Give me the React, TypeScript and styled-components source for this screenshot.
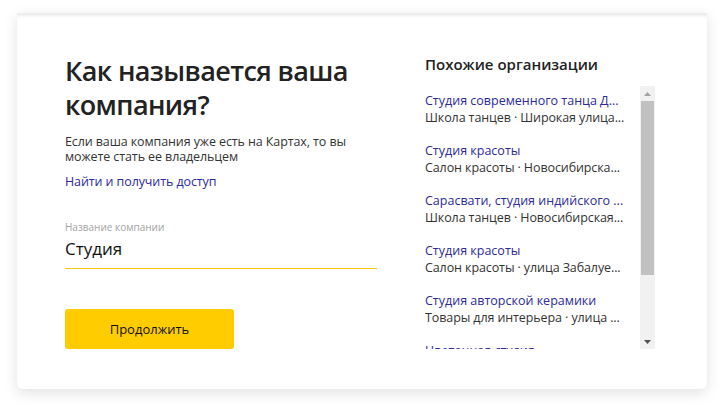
import React from "react";
import styled, { createGlobalStyle } from "styled-components";

const Global = createGlobalStyle`
  html, body { margin: 0; padding: 0; background: #fff; }
  body { font-family: "Open Sans", "Noto Sans", Arial, sans-serif; color: #222; }
  * { box-sizing: border-box; }
`;

const Page = styled.div`
  width: 720px;
  height: 410px;
  padding: 13px 13px 0 17px;
  background: #fff;
`;

const Card = styled.div`
  height: 376px;
  background: #fff;
  border-radius: 0 0 6px 6px;
  box-shadow: 0 4px 14px rgba(0, 0, 0, 0.12), inset 0 4px 3px -1px #ececec;
  display: grid;
  grid-template-columns: 312px 230px;
  column-gap: 48px;
  padding: 41px 52px 0 48px;
`;

const Left = styled.div`
  display: flex;
  flex-direction: column;
`;

const Title = styled.h1`
  margin: 0;
  font-size: 27px;
  line-height: 34px;
  font-weight: 600;
  color: #222;
  letter-spacing: -0.6px;
`;

const Lead = styled.p`
  margin: 12px 0 0;
  font-size: 12.5px;
  line-height: 15px;
  color: #333;
  letter-spacing: -0.1px;
`;

const Link = styled.a`
  margin-top: 10px;
  font-size: 12.5px;
  line-height: 16px;
  color: #2b2b9e;
  text-decoration: none;
  letter-spacing: -0.1px;
`;

const Field = styled.div`
  margin-top: 31px;
  display: flex;
  flex-direction: column;
  border-bottom: 1px solid #f5c800;
  padding-bottom: 8px;
`;

const Label = styled.span`
  font-size: 10px;
  line-height: 12px;
  color: #a3a3a3;
`;

const Value = styled.span`
  margin-top: 5px;
  font-size: 17px;
  line-height: 22px;
  color: #111;
`;

const Button = styled.button`
  margin-top: 40px;
  width: 169px;
  height: 40px;
  border: none;
  border-radius: 3px;
  background: #ffcc00;
  color: #111;
  font-family: inherit;
  font-size: 13px;
`;

const Right = styled.div`
  display: flex;
  flex-direction: column;
`;

const SideTitle = styled.h2`
  margin: 0;
  font-size: 15px;
  line-height: 20px;
  font-weight: 600;
  color: #222;
`;

const ListBox = styled.div`
  margin-top: 12px;
  height: 263px;
  display: flex;
  overflow: hidden;
`;

const List = styled.ul`
  list-style: none;
  margin: 0;
  padding: 7px 0 0;
  flex: 1;
  min-width: 0;
  display: flex;
  flex-direction: column;
  gap: 17px;
`;

const Item = styled.li`
  display: flex;
  flex-direction: column;
`;

const Name = styled.span`
  font-size: 12.5px;
  line-height: 16.5px;
  color: #2d2a9a;
  white-space: nowrap;
`;

const Sub = styled.span`
  font-size: 12.5px;
  line-height: 16.5px;
  color: #333;
  white-space: nowrap;
  letter-spacing: -0.1px;
`;

const Scrollbar = styled.div`
  width: 15px;
  flex: none;
  background: #f1f1f1;
  display: flex;
  flex-direction: column;
  align-items: center;
`;

const Arrow = styled.div`
  height: 15px;
  width: 15px;
  display: flex;
  align-items: center;
  justify-content: center;
`;

const Thumb = styled.div`
  width: 13px;
  height: 174px;
  background: #c1c1c1;
`;

const Spacer = styled.div`
  flex: 1;
`;

const items = [
  ["Студия современного танца Д...", "Школа танцев · Широкая улица..."],
  ["Студия красоты", "Салон красоты · Новосибирска..."],
  ["Сарасвати, студия индийского ...", "Школа танцев · Новосибирская..."],
  ["Студия красоты", "Салон красоты · улица Забалуе..."],
  ["Студия авторской керамики", "Товары для интерьера · улица ..."],
  ["Цветочная студия", "Цветы · улица Ленина, 3"],
];

export default function App() {
  return (
    <>
      <Global />
      <Page>
        <Card>
          <Left>
            <Title>Как называется ваша компания?</Title>
            <Lead>Если ваша компания уже есть на Картах, то вы можете стать ее владельцем</Lead>
            <Link href="#">Найти и получить доступ</Link>
            <Field>
              <Label>Название компании</Label>
              <Value>Студия</Value>
            </Field>
            <Button>Продолжить</Button>
          </Left>
          <Right>
            <SideTitle>Похожие организации</SideTitle>
            <ListBox>
              <List>
                {items.map(([n, s], i) => (
                  <Item key={i}>
                    <Name>{n}</Name>
                    <Sub>{s}</Sub>
                  </Item>
                ))}
              </List>
              <Scrollbar>
                <Arrow>
                  <svg width="7" height="4" viewBox="0 0 7 4"><path d="M0 4 L3.5 0 L7 4Z" fill="#a3a3a3" /></svg>
                </Arrow>
                <Thumb />
                <Spacer />
                <Arrow>
                  <svg width="7" height="4" viewBox="0 0 7 4"><path d="M0 0 L3.5 4 L7 0Z" fill="#505050" /></svg>
                </Arrow>
              </Scrollbar>
            </ListBox>
          </Right>
        </Card>
      </Page>
    </>
  );
}
